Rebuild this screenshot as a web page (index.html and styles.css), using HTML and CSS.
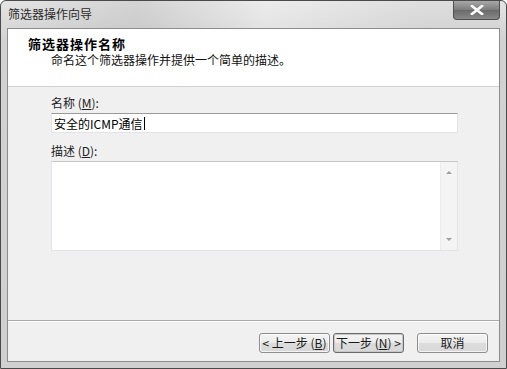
FILE: index.html
```html
<!DOCTYPE html>
<html lang="zh-CN">
<head>
  <meta charset="UTF-8">
  <title>筛选器操作向导</title>
  <link rel="stylesheet" href="styles.css">
</head>
<body>
  <div class="window">
    <div class="titlebar">
      <span class="title">筛选器操作向导</span>
      <button class="close-btn">
        <svg width="14" height="10" viewBox="0 0 14 10">
          <path d="M2 1 L12 9 M12 1 L2 9" stroke="#fff" stroke-width="2.6" stroke-linecap="square"/>
        </svg>
      </button>
    </div>

    <div class="client">
      <div class="header">
        <div class="header-title">筛选器操作名称</div>
        <div class="header-sub">命名这个筛选器操作并提供一个简单的描述。</div>
      </div>

      <div class="content">
        <label class="field-label">名称 (<u>M</u>):</label>
        <div class="textbox">安全的ICMP通信<span class="caret"></span></div>

        <label class="field-label second">描述 (<u>D</u>):</label>
        <div class="textarea">
          <div class="textarea-body"></div>
          <div class="scrollbar">
            <span class="arrow up"></span>
            <span class="arrow down"></span>
          </div>
        </div>
      </div>

      <div class="footer">
        <button class="btn">&lt; 上一步 (<u>B</u>)</button>
        <button class="btn btn-default">下一步 (<u>N</u>) &gt;</button>
        <button class="btn btn-cancel">取消</button>
      </div>
    </div>
  </div>
</body>
</html>
```

FILE: styles.css
```css
body {
  margin: 0;
  font-family: "Noto Sans CJK SC", "DejaVu Sans", sans-serif;
  font-size: 12px;
  color: #1a1a1a;
}

.window {
  width: 507px;
  height: 369px;
  box-sizing: border-box;
  border: 1px solid #4a4a4a;
  border-radius: 6px 6px 0 0;
  background: linear-gradient(#e4e4e4, #d2d2d2 40px, #d0d0d0);
  display: flex;
  flex-direction: column;
  padding: 0 6px 6px 6px;
}

.titlebar {
  height: 27px;
  display: flex;
  align-items: flex-start;
  justify-content: space-between;
  background: linear-gradient(90deg, rgba(255,255,255,0) 0, rgba(180,180,180,0.35) 130px, rgba(255,255,255,0.3) 260px, rgba(200,200,200,0.2) 420px);
}

.title {
  margin: 5px 0 0 1px;
  line-height: 16px;
  color: #2a2a2a;
}

.close-btn {
  width: 47px;
  height: 19px;
  padding: 0;
  border: 1px solid #505050;
  border-top: none;
  border-radius: 0 0 4px 4px;
  background: linear-gradient(#a8a8a8, #7c7c7c 50%, #6a6a6a 51%, #888888);
  display: flex;
  align-items: center;
  justify-content: center;
}

.client {
  flex: 1;
  border: 1px solid #8c8c8c;
  background-color: #f0f0f0;
  display: flex;
  flex-direction: column;
}

.header {
  height: 58px;
  box-sizing: border-box;
  background-color: white;
  border-bottom: 1px solid #d0d0d0;
  padding: 7px 0 0 20px;
}

.header-title {
  font-size: 13px;
  font-weight: bold;
  letter-spacing: 1px;
  line-height: 16px;
  color: #000;
}

.header-sub {
  margin-left: 23px;
  line-height: 16px;
  color: #111;
}

.content {
  flex: 1;
  padding: 8px 0 0 43px;
}

.field-label {
  display: block;
  line-height: 16px;
  margin-bottom: 2px;
  color: #222;
}

.field-label.second {
  margin-top: 10px;
}

.textbox {
  width: 407px;
  height: 20px;
  box-sizing: border-box;
  background: white;
  border: 1px solid #e2e3ea;
  border-top-color: #9a9a9a;
  padding: 1px 2px;
  line-height: 17px;
  color: #000;
  display: flex;
  align-items: center;
}

.caret {
  display: inline-block;
  width: 1px;
  height: 13px;
  background: #000;
  margin-left: 1px;
}

.textarea {
  width: 407px;
  height: 90px;
  box-sizing: border-box;
  border: 1px solid #e2e3ea;
  border-top-color: #c8c8c8;
  background: white;
  display: flex;
}

.textarea-body {
  flex: 1;
}

.scrollbar {
  width: 16px;
  background: #f4f4f4;
  border-left: 1px solid #ececec;
  display: flex;
  flex-direction: column;
  justify-content: space-between;
  align-items: center;
  padding: 9px 0 9px;
}

.arrow {
  width: 0;
  height: 0;
  border-left: 3px solid transparent;
  border-right: 3px solid transparent;
}

.arrow.up {
  border-bottom: 3px solid #a0a0a0;
}

.arrow.down {
  border-top: 3px solid #a0a0a0;
}

.footer {
  height: 41px;
  box-sizing: border-box;
  border-top: 1px solid #a8a8a8;
  box-shadow: inset 0 1px 0 #ffffff;
  display: flex;
  justify-content: flex-end;
  align-items: flex-start;
  padding: 12px 11px 0 0;
  gap: 3px;
}

.btn {
  width: 71px;
  height: 20px;
  padding: 0;
  font-family: inherit;
  font-size: 12px;
  line-height: 16px;
  color: #1a1a1a;
  border: 1px solid #8e8e8e;
  border-radius: 3px;
  background: linear-gradient(#f4f4f4, #ebebeb 50%, #dcdcdc 51%, #d8d8d8);
  box-shadow: inset 0 0 0 1px rgba(255,255,255,0.7);
}

.btn-default {
  border-color: #6a6a6a;
  box-shadow: inset 0 0 0 1px #c8c8c8;
}

.btn-cancel {
  margin-left: 10px;
}

u {
  text-decoration: underline;
}
```
